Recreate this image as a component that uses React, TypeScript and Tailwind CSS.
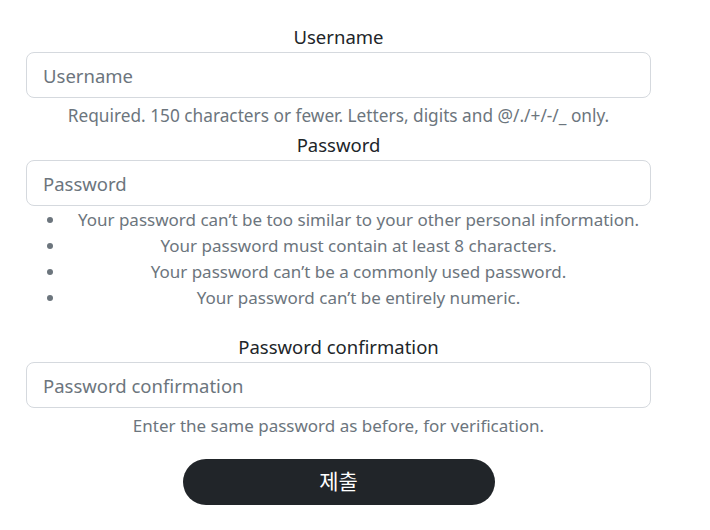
export default function App() {
  const rules = [
    'Your password can’t be too similar to your other personal information.',
    'Your password must contain at least 8 characters.',
    'Your password can’t be a commonly used password.',
    'Your password can’t be entirely numeric.',
  ];

  return (
    <div
      className="min-h-screen bg-white pt-[25px] text-[#212529]"
      style={{ fontFamily: '"Noto Sans", "Noto Sans CJK KR", sans-serif' }}>
      <form className="ml-[26px] w-[625px] text-center">
        <label className="block text-[18.5px] leading-[24px] mb-[3px]">Username</label>
        <input
          type="text"
          placeholder="Username"
          className="block w-full h-[46px] px-4 text-[18.5px] rounded-lg border border-[#d5d9de] placeholder:text-[#6c757d] outline-none"
        />
        <div className="mt-[6px] text-[17.25px] leading-[24px] text-[#6c757d]">
          Required. 150 characters or fewer. Letters, digits and @/./+/-/_ only.
        </div>

        <label className="block mt-[5px] text-[18.5px] leading-[24px] mb-[3px]">Password</label>
        <input
          type="password"
          placeholder="Password"
          className="block w-full h-[46px] px-4 text-[18.5px] rounded-lg border border-[#d5d9de] placeholder:text-[#6c757d] outline-none"
        />
        <ul className="list-disc pl-10 mt-px text-[17px] leading-[26px] text-[#6c757d]">
          {rules.map((r) => (
            <li key={r}>{r}</li>
          ))}
        </ul>

        <label className="block mt-[24px] text-[18.5px] leading-[24px] mb-[3px]">
          Password confirmation
        </label>
        <input
          type="password"
          placeholder="Password confirmation"
          className="block w-full h-[46px] px-4 text-[18.5px] rounded-lg border border-[#d5d9de] placeholder:text-[#6c757d] outline-none"
        />
        <div className="mt-[6px] text-[17px] leading-[24px] text-[#6c757d]">
          Enter the same password as before, for verification.
        </div>

        <button
          type="button"
          className="mx-auto mt-[21px] block w-[312px] h-[46px] rounded-full bg-[#212529] text-white text-[21px]">
          제출
        </button>
      </form>
    </div>
  );
}
